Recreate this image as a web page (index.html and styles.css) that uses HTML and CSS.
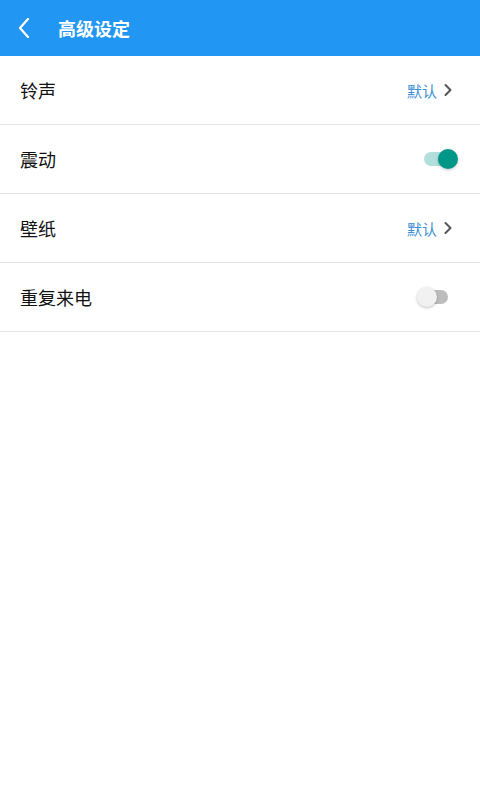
FILE: index.html
```html
<!DOCTYPE html>
<html lang="zh-CN">
<head>
    <meta charset="UTF-8">
    <meta name="viewport" content="width=device-width, initial-scale=1.0">
    <title>高级设定</title>
    <link rel="stylesheet" href="styles.css">
</head>
<body>
    <div class="toolbar">
        <svg class="back" width="14" height="20" viewBox="0 0 14 20">
            <path d="M11 1 L3 10 L11 19" fill="none" stroke="#fff" stroke-width="2.2" stroke-linecap="round" stroke-linejoin="round"/>
        </svg>
        <h1>高级设定</h1>
    </div>

    <div class="list">
        <div class="row">
            <span class="label">铃声</span>
            <span class="value">默认
                <svg class="arrow" width="10" height="14" viewBox="0 0 10 14">
                    <path d="M2.5 2 L7.5 7 L2.5 12" fill="none" stroke="#555" stroke-width="2" stroke-linecap="round" stroke-linejoin="round"/>
                </svg>
            </span>
        </div>
        <div class="row">
            <span class="label">震动</span>
            <span class="switch on"><span class="thumb"></span></span>
        </div>
        <div class="row">
            <span class="label">壁纸</span>
            <span class="value">默认
                <svg class="arrow" width="10" height="14" viewBox="0 0 10 14">
                    <path d="M2.5 2 L7.5 7 L2.5 12" fill="none" stroke="#555" stroke-width="2" stroke-linecap="round" stroke-linejoin="round"/>
                </svg>
            </span>
        </div>
        <div class="row">
            <span class="label">重复来电</span>
            <span class="switch off"><span class="thumb"></span></span>
        </div>
    </div>
</body>
</html>
```

FILE: styles.css
```css
body {
    margin: 0;
    background: #fff;
    font-family: "Noto Sans CJK SC", "Noto Sans", sans-serif;
    color: #111;
}
.toolbar {
    height: 56px;
    background: #2196f3;
    display: flex;
    align-items: center;
    padding-left: 17px;
}
.toolbar .back {
    display: block;
}
.toolbar h1 {
    margin: 0 0 0 27px;
    font-size: 18px;
    font-weight: bold;
    color: #fff;
    line-height: 1;
}
.row {
    height: 68px;
    border-bottom: 1px solid #e4e4e4;
    display: flex;
    align-items: center;
    justify-content: space-between;
    padding: 0 28px 0 20px;
}
.label {
    font-size: 18px;
    line-height: 1;
}
.value {
    display: flex;
    align-items: center;
    font-size: 15px;
    color: #3d8fd6;
}
.arrow {
    margin-left: 6px;
    margin-right: -1px;
}
.switch {
    position: relative;
    width: 30px;
    height: 14px;
    border-radius: 7px;
}
.switch .thumb {
    position: absolute;
    top: -3px;
    width: 20px;
    height: 20px;
    border-radius: 50%;
    box-shadow: 0 1px 3px rgba(0, 0, 0, 0.25);
}
.switch.on {
    background: #b2dfdb;
    margin-right: -2px;
}
.switch.on .thumb {
    right: -4px;
    background: #009688;
}
.switch.off {
    background: #bdbdbd;
    margin-right: 4px;
}
.switch.off .thumb {
    left: -1px;
    background: #f1f1f1;
}
```
